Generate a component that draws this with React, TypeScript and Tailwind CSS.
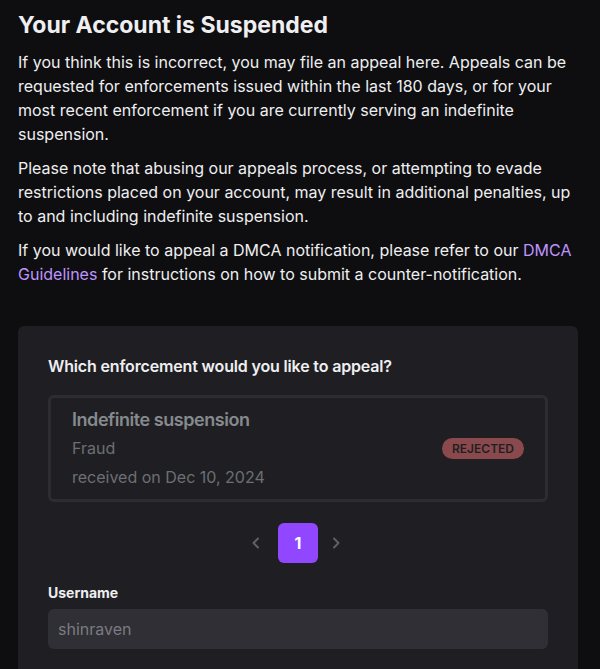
function ChevronLeft() {
  return (
    <svg width="16" height="16" viewBox="0 0 16 16" fill="none" aria-hidden="true">
      <path d="M10 3.5 5.5 8l4.5 4.5" stroke="#5f5f65" strokeWidth="2" strokeLinecap="round" strokeLinejoin="round" />
    </svg>
  );
}

function ChevronRight() {
  return (
    <svg width="16" height="16" viewBox="0 0 16 16" fill="none" aria-hidden="true">
      <path d="M6 3.5 10.5 8 6 12.5" stroke="#5f5f65" strokeWidth="2" strokeLinecap="round" strokeLinejoin="round" />
    </svg>
  );
}

export default function App() {
  return (
    <div className="min-h-screen bg-[#0e0e10] pl-[18px] pr-[22px] pt-[10px] pb-10 font-['Inter','Noto_Sans',sans-serif] text-[#efeff1]">
      <h1 className="text-[23px] font-bold leading-[30px]">Your Account is Suspended</h1>

      <div className="mt-[10px] flex flex-col gap-[10px] text-[16px] leading-[24px]">
        <p>
          If you think this is incorrect, you may file an appeal here. Appeals can be requested for
          enforcements issued within the last 180 days, or for your most recent enforcement if you
          are currently serving an indefinite suspension.
        </p>
        <p>
          Please note that abusing our appeals process, or attempting to evade restrictions placed on
          your account, may result in additional penalties, up to and including indefinite
          suspension.
        </p>
        <p>
          If you would like to appeal a DMCA notification, please refer to our{" "}
          <a className="text-[#bf94ff]">DMCA Guidelines</a> for instructions on how to submit a
          counter-notification.
        </p>
      </div>

      <section className="mt-[40px] rounded-md bg-[#1f1f23] px-[30px] pt-[28px] pb-10">
        <h2 className="text-[16px] font-semibold leading-[24px] tracking-[-0.01em]">
          Which enforcement would you like to appeal?
        </h2>

        <div className="mt-[17px] flex items-center justify-between rounded-md border-[3px] border-[#2c2c31] px-[21px] py-[10px]">
          <div className="flex flex-col">
            <span className="text-[18px] font-semibold leading-[24px] tracking-[-0.025em] text-[#868a8e]">
              Indefinite suspension
            </span>
            <span className="mt-[4px] text-[16px] leading-[24px] text-[#6c6f73]">Fraud</span>
            <span className="mt-[5px] text-[16px] leading-[24px] text-[#6c6f73]">
              received on Dec 10, 2024
            </span>
          </div>
          <span className="rounded-full bg-[#8a4a4d] px-[10px] text-[12px] font-semibold leading-[21px] text-[#1f1f23]">
            REJECTED
          </span>
        </div>

        <div className="mt-[21px] flex items-center justify-center">
          <span className="mr-[14px] flex">
            <ChevronLeft />
          </span>
          <span className="flex h-10 w-10 items-center justify-center rounded-md bg-[#9147ff] text-[16px] font-bold text-white">
            1
          </span>
          <span className="ml-[10px] mr-[4px] flex">
            <ChevronRight />
          </span>
        </div>

        <label className="mt-[20px] block text-[14px] font-bold leading-[20px]">Username</label>
        <div className="mt-[6px] flex h-10 items-center rounded-md bg-[#2f2f35] px-[10px] text-[16px] text-[#7b7b80]">
          shinraven
        </div>
      </section>
    </div>
  );
}
